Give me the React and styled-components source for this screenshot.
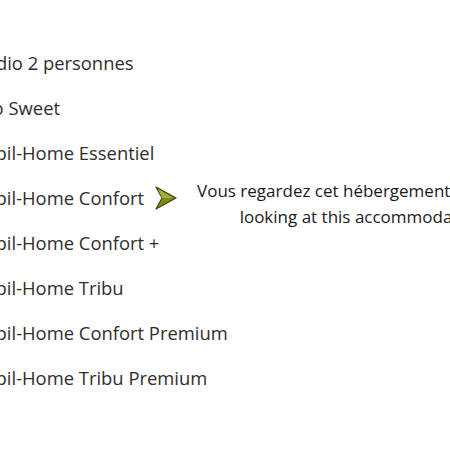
import React from 'react';
import styled, { createGlobalStyle } from 'styled-components';

const GlobalStyle = createGlobalStyle`
  html, body {
    margin: 0;
    padding: 0;
    background: #ffffff;
    overflow: hidden;
  }
  body {
    font-family: "Open Sans", "Liberation Sans", sans-serif;
  }
`;

const accommodations = [
  'Studio 2 personnes',
  'Duo Sweet',
  'Mobil-Home Essentiel',
  'Mobil-Home Confort',
  'Mobil-Home Confort +',
  'Mobil-Home Tribu',
  'Mobil-Home Confort Premium',
  'Mobil-Home Tribu Premium',
];

const current = 'Mobil-Home Confort';

function Arrow() {
  return (
    <svg width="22" height="24" viewBox="0 0 22 24">
      <polygon points="1,1 21,12 1,23 7,12" fill="#7d8a1c" stroke="#3d4410" strokeWidth="1.2" strokeLinejoin="round" />
      <polygon points="3,3 18,12 7,12" fill="#a3b03a" />
    </svg>
  );
}

export default function App() {
  return (
    <Page>
      <GlobalStyle />
      <List>
        {accommodations.map((name) => (
          <Row key={name}>
            <Name>{name}</Name>
            {name === current && (
              <>
                <Pointer>
                  <Arrow />
                </Pointer>
                <Message>
                  Vous regardez cet hébergement / You are
                  <br />
                  looking at this accommodation
                </Message>
              </>
            )}
          </Row>
        ))}
      </List>
    </Page>
  );
}

const Page = styled.div`
  width: 450px;
  height: 450px;
  overflow: hidden;
  padding-top: 40px;
  box-sizing: border-box;
`;

const List = styled.ul`
  list-style: none;
  margin: 0 0 0 -32px;
  padding: 0;
  display: flex;
  flex-direction: column;
`;

const Row = styled.li`
  display: flex;
  align-items: center;
  height: 45px;
  white-space: nowrap;
`;

const Name = styled.span`
  font-size: 18.4px;
  color: #2e2e2e;
`;

const Pointer = styled.span`
  display: flex;
  margin-left: 11px;
`;

const Message = styled.div`
  margin-left: 20px;
  margin-top: 12px;
  font-size: 17px;
  line-height: 26px;
  color: #1a1a1a;
  text-align: center;
`;
